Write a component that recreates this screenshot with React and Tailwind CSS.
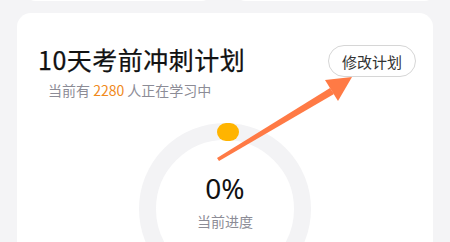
export default function App() {
  return (
    <div
      className="relative w-[450px] h-[242px] overflow-hidden bg-[#f4f4f6]"
      style={{ fontFamily: '"Noto Sans CJK SC", "Noto Sans", sans-serif' }}
    >
      {/* previous cards peeking at top */}
      <div className="flex gap-[23px] px-[25px] -mt-[20px] pr-[15px]">
        <div className="h-[21px] w-[187px] rounded-[12px] bg-white" />
        <div className="h-[21px] flex-1 rounded-[12px] bg-white" />
      </div>

      <div className="mx-[17px] mt-[12px] h-[260px] rounded-[14px] bg-white flex flex-col">
        <div className="flex items-start justify-between pl-[21px] pr-[17px] pt-[30px]">
          <div>
            <h1 className="text-[25px] leading-[32px] font-normal text-[#111] tracking-[0.5px] [-webkit-text-stroke:0.25px_#111]">10天考前冲刺计划</h1>
            <p className="mt-[5px] ml-[10px] text-[14px] leading-[20px] text-[#8c8c96]">
              当前有 <span className="text-[#f08a1c]">2280</span> 人正在学习中
            </p>
          </div>
          <button className="mt-[2px] h-[32px] px-[13px] rounded-full border border-[#d6d6d6] text-[15px] text-[#333] leading-none">
            修改计划
          </button>
        </div>

        <div className="flex justify-center mt-[23px]">
          <div className="relative w-[172px] h-[172px] rounded-full border-[17px] border-[#f3f3f5] flex flex-col items-center">
            <div className="absolute -top-[17px] left-[61px] w-[22px] h-[18px] rounded-full bg-[#ffb400]" />
            <div className="mt-[30px] text-[28px] leading-[36px] text-[#111]" style={{ fontFamily: '"Noto Sans", sans-serif' }}>0%</div>
            <div className="mt-[5px] text-[14px] leading-[20px] text-[#8c8c96]">当前进度</div>
          </div>
        </div>
      </div>

      {/* annotation arrow */}
      <svg className="absolute left-0 top-0" width="450" height="242" viewBox="0 0 450 242">
        <polygon points="217,158 219,161 334,94 330,88" fill="#ff7a45" />
        <polygon points="352,77 325,80 338,101" fill="#ff7a45" />
      </svg>
    </div>
  );
}
